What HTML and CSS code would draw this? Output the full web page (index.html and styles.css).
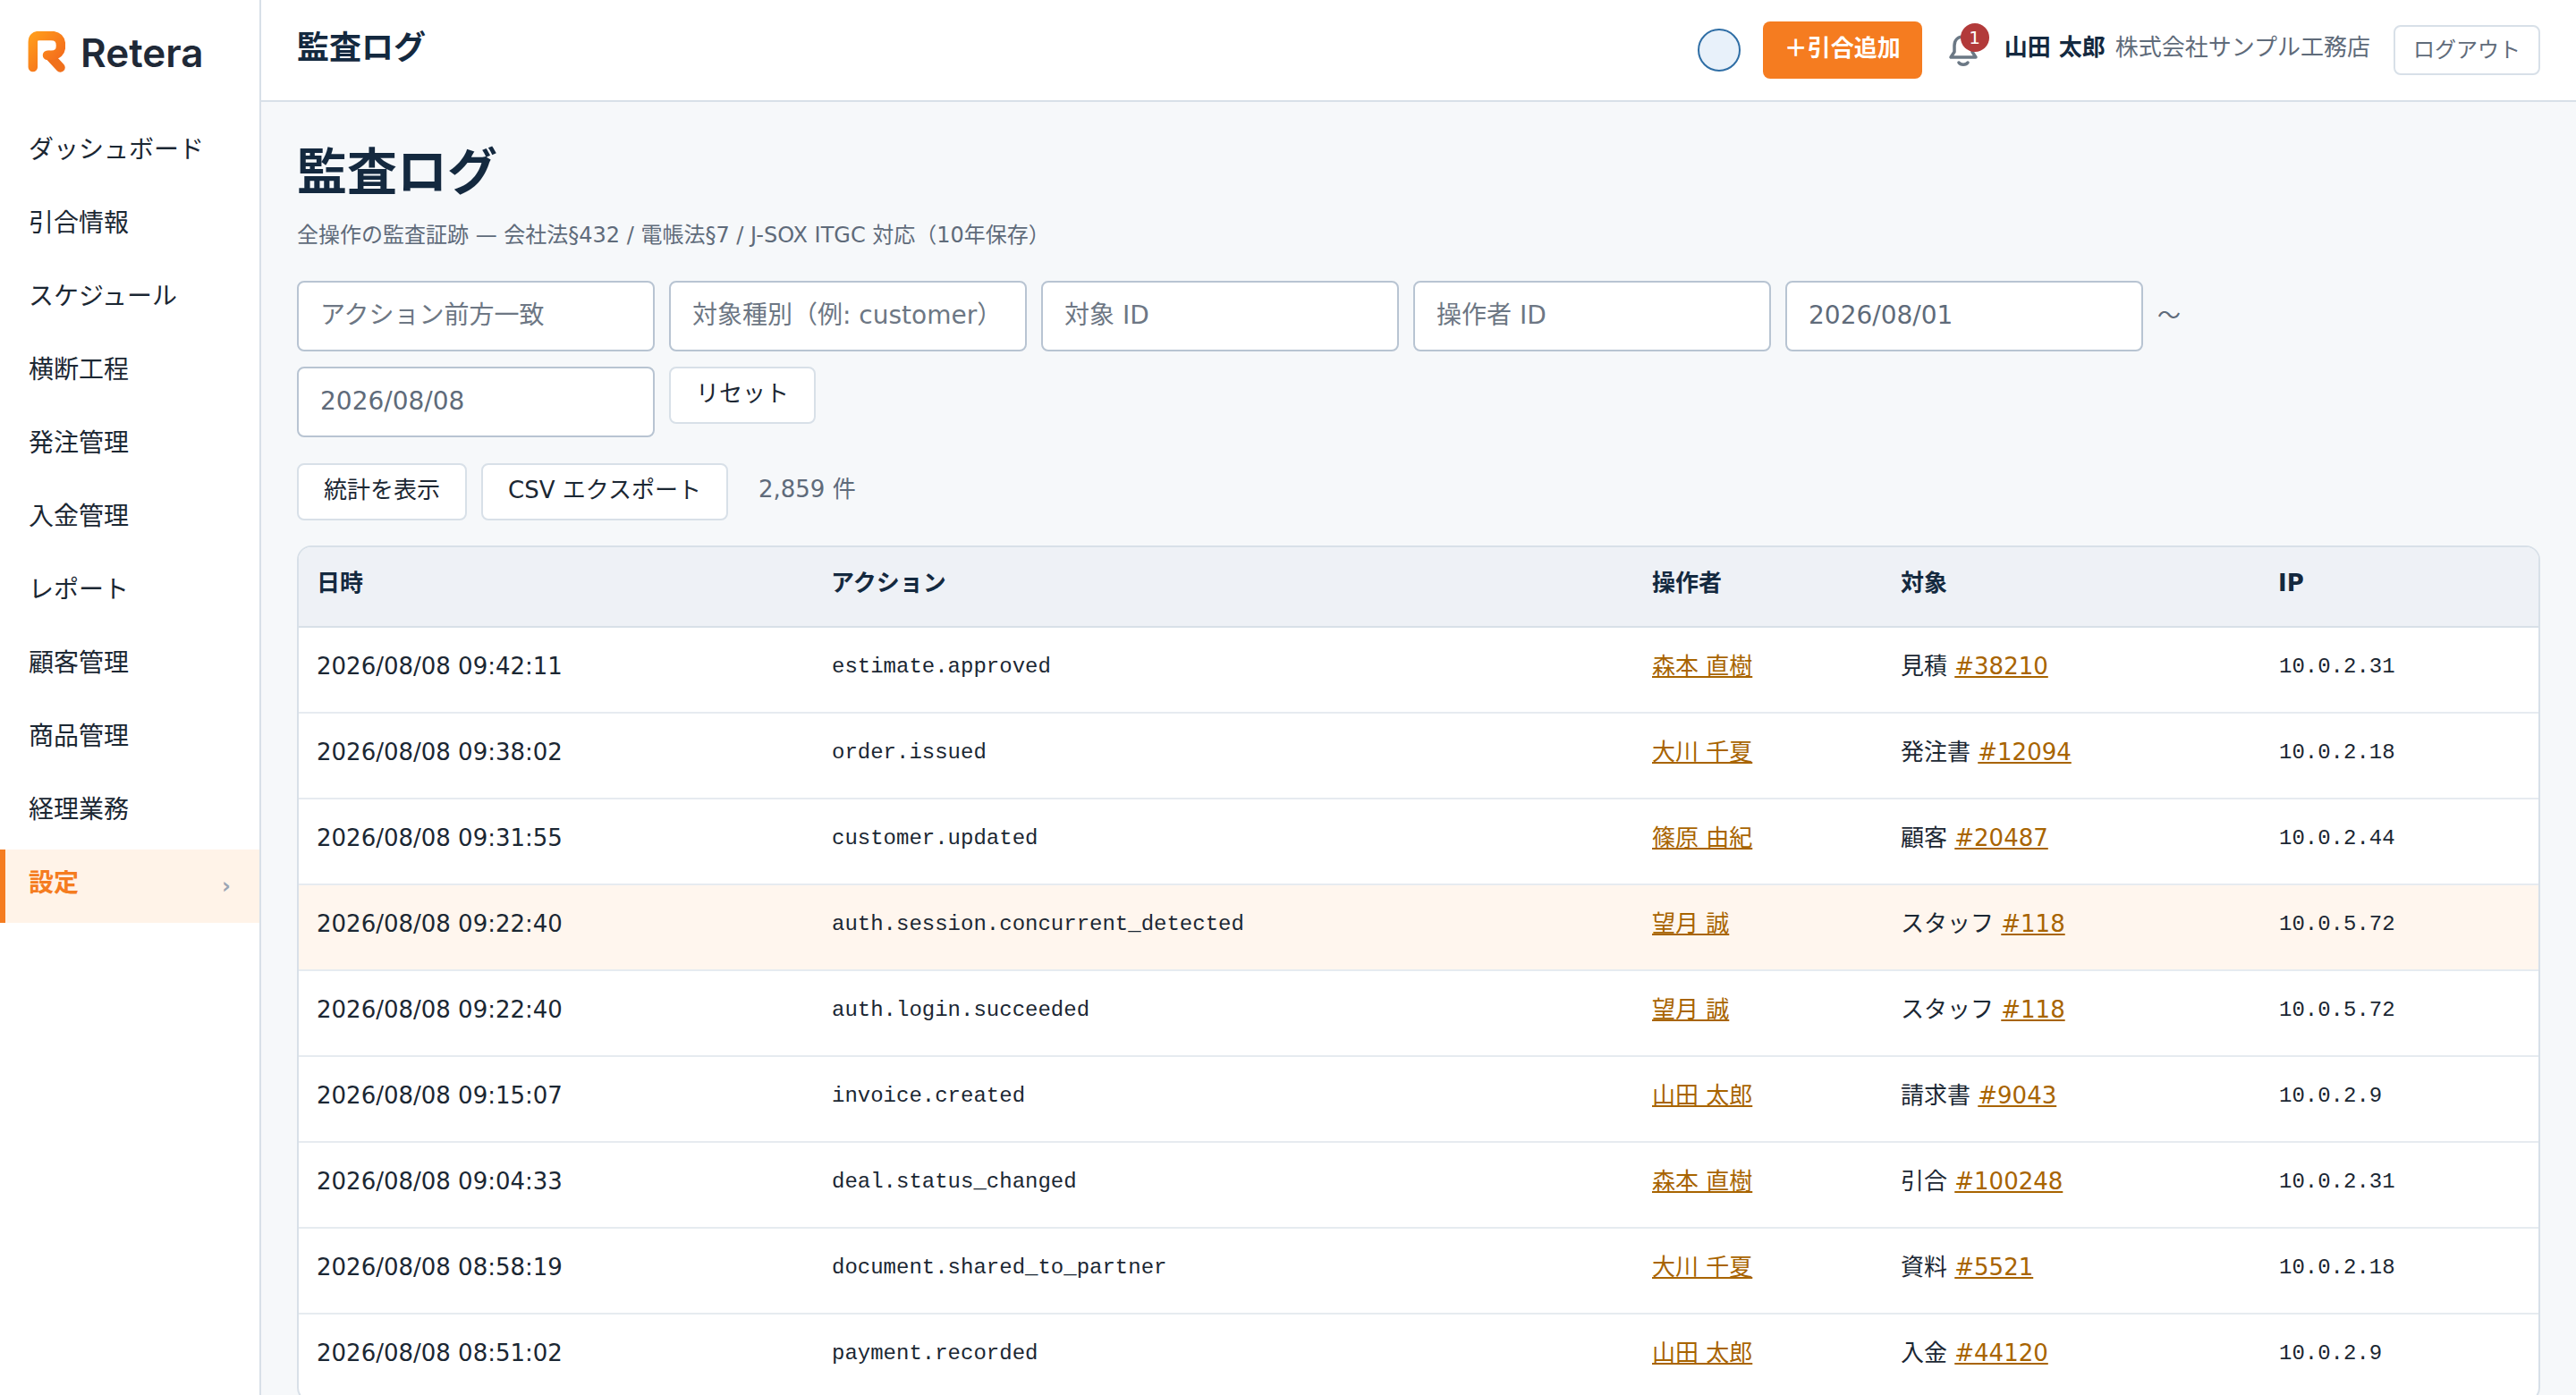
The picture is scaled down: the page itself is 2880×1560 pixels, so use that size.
FILE: index.html
```html
<!DOCTYPE html>
<html lang="ja">

<head>
    <meta charset="UTF-8">
    <title>監査ログ - Retera</title>
    <link rel="stylesheet" href="styles.css">
</head>

<body>
    <div class="app">
        <aside class="sidebar">
            <div class="brand">
                <svg class="brand-mark" viewBox="0 0 42 46" width="42" height="46">
                    <defs>
                        <linearGradient id="logoFill" x1="0" y1="0" x2="1" y2="1">
                            <stop offset="0" stop-color="#ff9a1c" />
                            <stop offset="1" stop-color="#f2661c" />
                        </linearGradient>
                    </defs>
                    <path d="M24 27 L36.5 40.5" fill="none" stroke="#f0701c" stroke-width="10.5"
                        stroke-linecap="round" />
                    <path d="M5.8 40 V12 Q5.8 5 13 5 H26 Q37 5 37 16 Q37 26.7 26 26.7 H22" fill="none"
                        stroke="url(#logoFill)" stroke-width="10.5" stroke-linecap="round" stroke-linejoin="round" />
                </svg>
                <span class="brand-name">Retera</span>
            </div>
            <nav class="nav">
                <a class="nav-item">ダッシュボード</a>
                <a class="nav-item">引合情報</a>
                <a class="nav-item">スケジュール</a>
                <a class="nav-item">横断工程</a>
                <a class="nav-item">発注管理</a>
                <a class="nav-item">入金管理</a>
                <a class="nav-item">レポート</a>
                <a class="nav-item">顧客管理</a>
                <a class="nav-item">商品管理</a>
                <a class="nav-item">経理業務</a>
                <a class="nav-item active">設定<span class="nav-caret">›</span></a>
            </nav>
        </aside>

        <div class="main">
            <header class="topbar">
                <div class="topbar-title">監査ログ</div>
                <div class="topbar-right">
                    <span class="status-dot"></span>
                    <button class="add-btn">＋引合追加</button>
                    <span class="bell">
                        <svg viewBox="0 0 34 38" width="34" height="38">
                            <path d="M3 27 H31 L27 21 V14 C27 8 23 4 17 4 C11 4 7 8 7 14 V21 Z" fill="none"
                                stroke="#6b7885" stroke-width="3.5" stroke-linejoin="round" />
                            <path d="M12 33 C14 36 20 36 22 33" fill="none" stroke="#6b7885" stroke-width="3.5"
                                stroke-linecap="round" />
                        </svg>
                        <span class="bell-badge">1</span>
                    </span>
                    <span class="user-name">山田 太郎</span>
                    <span class="user-company">株式会社サンプル工務店</span>
                    <button class="logout-btn">ログアウト</button>
                </div>
            </header>

            <main class="content">
                <h1>監査ログ</h1>
                <p class="subtitle">全操作の監査証跡 — 会社法§432 / 電帳法§7 / J-SOX ITGC 対応（10年保存）</p>

                <div class="filters">
                    <input class="field" type="text" placeholder="アクション前方一致">
                    <input class="field" type="text" placeholder="対象種別（例: customer）">
                    <input class="field" type="text" placeholder="対象 ID">
                    <input class="field" type="text" placeholder="操作者 ID">
                    <input class="field" type="text" value="2026/08/01">
                    <span class="range-sep">〜</span>
                    <input class="field" type="text" value="2026/08/08">
                    <button class="btn">リセット</button>
                </div>

                <div class="actions">
                    <button class="btn">統計を表示</button>
                    <button class="btn">CSV エクスポート</button>
                    <span class="count">2,859 件</span>
                </div>

                <div class="table-wrap">
                    <table class="log-table">
                        <colgroup>
                            <col class="col-date">
                            <col class="col-action">
                            <col class="col-user">
                            <col class="col-target">
                            <col class="col-ip">
                        </colgroup>
                        <thead>
                            <tr>
                                <th>日時</th>
                                <th>アクション</th>
                                <th>操作者</th>
                                <th>対象</th>
                                <th>IP</th>
                            </tr>
                        </thead>
                        <tbody>
                            <tr>
                                <td>2026/08/08 09:42:11</td>
                                <td class="mono">estimate.approved</td>
                                <td><a href="#">森本 直樹</a></td>
                                <td>見積 <a href="#">#38210</a></td>
                                <td class="mono">10.0.2.31</td>
                            </tr>
                            <tr>
                                <td>2026/08/08 09:38:02</td>
                                <td class="mono">order.issued</td>
                                <td><a href="#">大川 千夏</a></td>
                                <td>発注書 <a href="#">#12094</a></td>
                                <td class="mono">10.0.2.18</td>
                            </tr>
                            <tr>
                                <td>2026/08/08 09:31:55</td>
                                <td class="mono">customer.updated</td>
                                <td><a href="#">篠原 由紀</a></td>
                                <td>顧客 <a href="#">#20487</a></td>
                                <td class="mono">10.0.2.44</td>
                            </tr>
                            <tr class="flagged">
                                <td>2026/08/08 09:22:40</td>
                                <td class="mono">auth.session.concurrent_detected</td>
                                <td><a href="#">望月 誠</a></td>
                                <td>スタッフ <a href="#">#118</a></td>
                                <td class="mono">10.0.5.72</td>
                            </tr>
                            <tr>
                                <td>2026/08/08 09:22:40</td>
                                <td class="mono">auth.login.succeeded</td>
                                <td><a href="#">望月 誠</a></td>
                                <td>スタッフ <a href="#">#118</a></td>
                                <td class="mono">10.0.5.72</td>
                            </tr>
                            <tr>
                                <td>2026/08/08 09:15:07</td>
                                <td class="mono">invoice.created</td>
                                <td><a href="#">山田 太郎</a></td>
                                <td>請求書 <a href="#">#9043</a></td>
                                <td class="mono">10.0.2.9</td>
                            </tr>
                            <tr>
                                <td>2026/08/08 09:04:33</td>
                                <td class="mono">deal.status_changed</td>
                                <td><a href="#">森本 直樹</a></td>
                                <td>引合 <a href="#">#100248</a></td>
                                <td class="mono">10.0.2.31</td>
                            </tr>
                            <tr>
                                <td>2026/08/08 08:58:19</td>
                                <td class="mono">document.shared_to_partner</td>
                                <td><a href="#">大川 千夏</a></td>
                                <td>資料 <a href="#">#5521</a></td>
                                <td class="mono">10.0.2.18</td>
                            </tr>
                            <tr>
                                <td>2026/08/08 08:51:02</td>
                                <td class="mono">payment.recorded</td>
                                <td><a href="#">山田 太郎</a></td>
                                <td>入金 <a href="#">#44120</a></td>
                                <td class="mono">10.0.2.9</td>
                            </tr>
                        </tbody>
                    </table>
                </div>
            </main>
        </div>
    </div>
</body>

</html>
```

FILE: styles.css
```css
html,
body {
    margin: 0;
    padding: 0;
    height: 100%;
    overflow: hidden;
}

body {
    font-family: "DejaVu Sans", "Noto Sans CJK JP", sans-serif;
    font-size: 26px;
    line-height: 1.5;
    color: #1b2733;
    background: #f6f8fa;
}

.app {
    display: flex;
    height: 100vh;
}

/* sidebar */
.sidebar {
    width: 292px;
    flex-shrink: 0;
    box-sizing: border-box;
    background: #ffffff;
    border-right: 2px solid #d8e0e8;
}

.brand {
    display: flex;
    align-items: center;
    gap: 17px;
    height: 130px;
    padding: 0 0 14px 31px;
    box-sizing: border-box;
}

.brand-name {
    font-family: "Inter", sans-serif;
    font-size: 44px;
    font-weight: 600;
    color: #1f2937;
    padding-top: 2px;
}

.nav-item {
    display: flex;
    align-items: center;
    justify-content: space-between;
    height: 82px;
    padding: 0 32px 6px;
    box-sizing: border-box;
    font-size: 28px;
    color: #1b2733;
}

.nav-item.active {
    padding-left: 26px;
    border-left: 6px solid #f57c20;
    background: #fff3e8;
    color: #f57c20;
    font-weight: 700;
}

.nav-caret {
    font-size: 24px;
    color: #9aa5b4;
    padding-top: 6px;
}

/* top bar */
.main {
    flex: 1;
    min-width: 0;
    display: flex;
    flex-direction: column;
}

.topbar {
    display: flex;
    align-items: center;
    justify-content: space-between;
    flex-shrink: 0;
    height: 114px;
    box-sizing: border-box;
    padding: 0 40px;
    background: #ffffff;
    border-bottom: 2px solid #d8e0e8;
}

.topbar-title {
    font-size: 36px;
    font-weight: 700;
    color: #14293f;
    margin-top: -4px;
}

.topbar-right {
    display: flex;
    align-items: center;
}

.status-dot {
    width: 48px;
    height: 48px;
    box-sizing: border-box;
    border-radius: 50%;
    background: #e8f1fa;
    border: 2px solid #2f6ea5;
    margin-right: 25px;
}

.add-btn {
    height: 64px;
    padding: 0 24px 10px;
    font-family: inherit;
    font-size: 26px;
    font-weight: 700;
    color: #ffffff;
    background: #f57c20;
    border: none;
    border-radius: 8px;
    margin-right: 29px;
}

.bell {
    position: relative;
    display: flex;
    width: 34px;
    height: 38px;
    margin-right: 29px;
}

.bell-badge {
    position: absolute;
    top: -11px;
    left: 14px;
    width: 32px;
    height: 32px;
    border-radius: 50%;
    background: #b23a3a;
    color: #ffffff;
    font-size: 20px;
    line-height: 32px;
    text-align: center;
}

.user-name {
    font-weight: 700;
    color: #14293f;
    margin-right: 11px;
    padding-bottom: 6px;
}

.user-company {
    color: #5f6b7a;
    margin-right: 26px;
    padding-bottom: 6px;
}

.logout-btn {
    height: 56px;
    padding: 0 20px 6px;
    font-family: inherit;
    font-size: 24px;
    color: #5f6b7a;
    background: #ffffff;
    border: 2px solid #d8e0e8;
    border-radius: 8px;
}

/* page content */
.content {
    flex: 1;
    min-height: 0;
    padding: 40px 40px 0;
    overflow: hidden;
}

h1 {
    margin: 0;
    padding-top: 2px;
    font-size: 56px;
    line-height: 74px;
    font-weight: 700;
    color: #14293f;
}

.subtitle {
    margin: 15px 0 33px;
    font-size: 24px;
    line-height: 36px;
    color: #5f6b7a;
}

.filters {
    display: flex;
    flex-wrap: wrap;
    align-items: flex-start;
    gap: 17px 16px;
}

.field {
    width: 400px;
    height: 79px;
    box-sizing: border-box;
    padding: 0 24px 2px;
    font-family: inherit;
    font-size: 28px;
    color: #5f6b7a;
    background: #ffffff;
    border: 2px solid #b8c4d2;
    border-radius: 8px;
    outline: none;
}

.field::placeholder {
    color: #6d7784;
    opacity: 1;
}

.range-sep {
    line-height: 78px;
    color: #5f6b7a;
}

.btn {
    height: 64px;
    padding: 0 28px 10px;
    font-family: inherit;
    font-size: 26px;
    color: #1b2733;
    background: #ffffff;
    border: 2px solid #d8e0e8;
    border-radius: 8px;
}

.actions {
    display: flex;
    align-items: center;
    gap: 16px;
    margin: 29px 0 28px;
}

.count {
    margin-left: 18px;
    color: #5f6b7a;
    padding-bottom: 6px;
}

/* log table */
.table-wrap {
    background: #ffffff;
    border: 2px solid #d8e0e8;
    border-radius: 16px;
    overflow: hidden;
}

.log-table {
    width: 100%;
    table-layout: fixed;
    border-collapse: separate;
    border-spacing: 0;
}

.col-date {
    width: 575px;
}

.col-action {
    width: 918px;
}

.col-user {
    width: 278px;
}

.col-target {
    width: 422px;
}

.log-table th {
    height: 90px;
    box-sizing: border-box;
    padding: 0 20px 7px;
    text-align: left;
    font-weight: 700;
    color: #14293f;
    background: #eef1f6;
    border-bottom: 2px solid #d8e0e8;
}

.log-table td {
    height: 96px;
    padding: 0 20px 8px;
    box-sizing: border-box;
    border-bottom: 2px solid #e6ebf0;
}

.log-table .flagged td {
    background: #fff6ee;
}

.log-table a {
    color: #a86400;
}

.log-table td.mono {
    padding: 0 20px 6px 21px;
    font-family: "Liberation Mono", monospace;
    font-size: 24px;
}
```
